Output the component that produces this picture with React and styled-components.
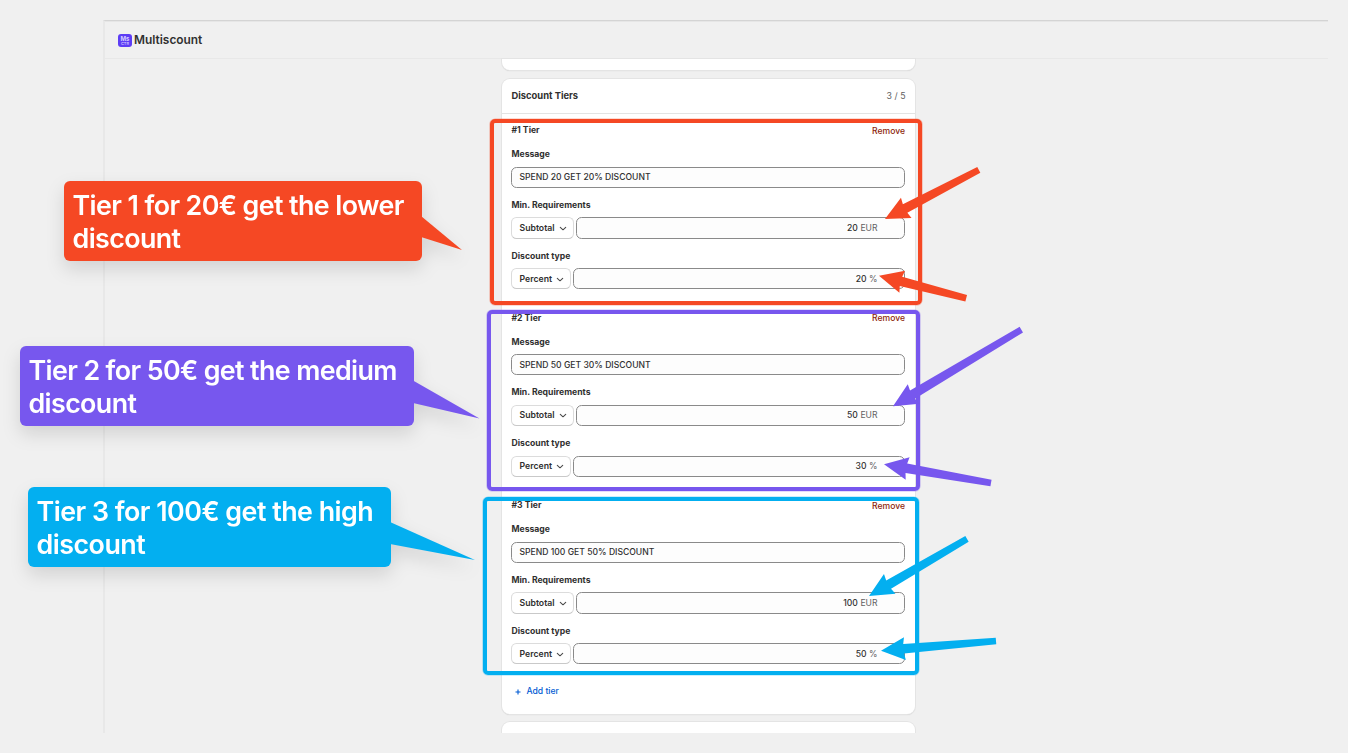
import styled, { createGlobalStyle } from "styled-components";

const GlobalStyle = createGlobalStyle`
  * {
    box-sizing: border-box;
  }
  body {
    margin: 0;
    background: #f0f0f0;
    font-family: Inter, "Liberation Sans", sans-serif;
    color: #303030;
  }
`;

const Page = styled.main`
  position: relative;
  width: 1348px;
  height: 753px;
  padding: 20px 20px 20px 103px;
  overflow: hidden;
  background: #f0f0f0;
`;

const Frame = styled.section`
  height: 713px;
  display: flex;
  flex-direction: column;
  overflow: hidden;
  border-top: 1px solid #d4d4d4;
  border-left: 2px solid #e8e8e8;
  box-shadow: inset 0 1px 0 #e6e6e6;
`;

const TopBar = styled.header`
  height: 38px;
  flex: none;
  display: flex;
  align-items: center;
  gap: 2px;
  padding: 0 13px;
  border-bottom: 1px solid #e8e8e8;
`;

const AppIcon = styled.span`
  width: 14px;
  height: 13px;
  margin-top: 2px;
  display: flex;
  flex-direction: column;
  align-items: center;
  border-radius: 3px;
  background: #5d3df5;
  color: #d6cdff;
  font-size: 6px;
  font-weight: 700;
  line-height: 7px;
  padding-top: 1px;
`;

const AppIconSub = styled.span`
  font-size: 4px;
  font-weight: 500;
  line-height: 4px;
`;

const AppName = styled.h1`
  margin: 0;
  font-size: 11.9px;
  font-weight: 600;
  line-height: 16px;
`;

const Content = styled.div`
  width: 413px;
  margin-left: 397px;
  display: flex;
  flex-direction: column;
  gap: 8.2px;
`;

const Card = styled.div`
  flex: none;
  height: ${p => p.$height}px;
  border-radius: ${p => p.$radius || "8px"};
  background: #fff;
  box-shadow: 0 0 0 1px #e4e4e4, 0 1px 1px #c8c8c8;
`;

const CardHeader = styled.div`
  height: 35.5px;
  display: flex;
  align-items: center;
  justify-content: space-between;
  padding: 0 9.5px;
  border-bottom: 1px solid #e3e3e3;
`;

const CardTitle = styled.h2`
  margin: 0;
  font-size: 9.4px;
  font-weight: 650;
  line-height: 12px;
`;

const Count = styled.span`
  font-size: 8.8px;
  line-height: 12px;
  color: #616161;
`;

const TierBlock = styled.div`
  height: 187.5px;
  display: flex;
  flex-direction: column;
  gap: 11px;
  padding: 10px 10px 0 9px;
  border-bottom: 1px solid #ebebeb;

  &:nth-of-type(4) {
    border-bottom-color: transparent;
  }
`;

const TierHead = styled.div`
  height: 13px;
  display: flex;
  justify-content: space-between;
`;

const Label = styled.span`
  padding-left: 0.5px;
  font-size: 8.65px;
  font-weight: 650;
  line-height: 12px;
`;

const Remove = styled.span`
  padding-top: 0.6px;
  font-size: 8.6px;
  font-weight: 450;
  line-height: 12px;
  color: #8e1f0b;
`;

const Field = styled.div`
  height: 39.75px;
  display: flex;
  flex-direction: column;
  justify-content: space-between;
`;

const Controls = styled.div`
  display: flex;
  gap: 2px;
`;

const Input = styled.div`
  flex: 1;
  height: 21.25px;
  display: flex;
  align-items: center;
  justify-content: ${p => (p.$end ? "flex-end" : "flex-start")};
  gap: 2.5px;
  padding: 0 ${p => (p.$end ? "26.5px" : "8px")} 0.4px 7.5px;
  border: 1px solid #8a8a8a;
  border-radius: 5.5px;
  background: #fdfdfd;
  font-size: 8.6px;
  font-weight: 450;
`;

const Unit = styled.span`
  color: #616161;
  font-weight: 400;
`;

const Picker = styled.div`
  width: ${p => p.$width}px;
  height: 21.25px;
  display: flex;
  align-items: center;
  justify-content: space-between;
  padding: 0 6.5px 0 7.5px;
  border: 1px solid #dcdcdc;
  border-bottom-color: #c9c9c9;
  border-radius: 5.5px;
  background: #fff;
  font-size: 8.7px;
  font-weight: 600;
`;

const AddTier = styled.div`
  display: flex;
  align-items: center;
  gap: 6px;
  padding: 8.2px 12.5px;
  color: #005bd3;
  font-size: 8.6px;
  font-weight: 450;
  line-height: 12px;

  svg {
    margin-top: 2px;
  }
`;

const Highlight = styled.div`
  position: absolute;
  left: ${p => p.$box[0]}px;
  top: ${p => p.$box[1]}px;
  width: ${p => p.$box[2]}px;
  height: ${p => p.$box[3]}px;
  border: 4px solid ${p => p.$color};
  border-radius: 5px;
  box-shadow: 0 0 0 0.6px ${p => p.$color}66;
`;

const Callout = styled.div`
  position: absolute;
  left: ${p => p.$box[0]}px;
  top: ${p => p.$box[1]}px;
  width: ${p => p.$box[2]}px;
  height: 80px;
  padding: 8px 8.5px;
  border-radius: 6px;
  background: ${p => p.$color};
  color: #fff;
  font-size: 26.8px;
  font-weight: 600;
  line-height: 33px;
  letter-spacing: ${p => p.$spacing}px;
  white-space: pre;
  filter: drop-shadow(0 8px 9px rgba(0, 0, 0, 0.12));
`;

const Tail = styled.svg`
  position: absolute;
  left: 100%;
  top: 0;
  overflow: visible;
`;

const ArrowLayer = styled.svg`
  position: absolute;
  inset: 0;
  pointer-events: none;
`;

const RED = "#f54824";
const PURPLE = "#7757ee";
const BLUE = "#03aff0";

const tiers = [
  { message: "SPEND 20 GET 20% DISCOUNT", min: 20, percent: 20 },
  { message: "SPEND 50 GET 30% DISCOUNT", min: 50, percent: 30 },
  { message: "SPEND 100 GET 50% DISCOUNT", min: 100, percent: 50 },
];

const highlights = [
  { color: RED, box: [489.5, 118.5, 432.5, 186.5] },
  { color: PURPLE, box: [487, 309.5, 433, 181.5] },
  { color: BLUE, box: [483, 496.5, 436, 178.5] },
];

const callouts = [
  { color: RED, box: [64, 181, 358], spacing: -0.58, tail: "-1,35 40,69 -1,56", text: "Tier 1 for 20€ get the lower\ndiscount" },
  { color: PURPLE, box: [20, 346, 394], spacing: -0.61, tail: "-1,34.5 65.5,72.5 -1,57", text: "Tier 2 for 50€ get the medium\ndiscount" },
  { color: BLUE, box: [28, 487, 363], spacing: -0.5, tail: "-1,35 84,73 -1,57", text: "Tier 3 for 100€ get the high\ndiscount" },
];

const arrows = [
  { color: RED, tip: [885, 219], end: [978.8, 169.8] },
  { color: RED, tip: [879, 275.7], end: [966.2, 298.2] },
  { color: PURPLE, tip: [893, 406.3], end: [1021.3, 329.7] },
  { color: PURPLE, tip: [884, 464.3], end: [991, 483] },
  { color: BLUE, tip: [869, 596], end: [967, 538.8] },
  { color: BLUE, tip: [881, 650.7], end: [996, 641] },
];

// the shaft gets thicker towards the head
const Arrow = ({ color, tip, end }) => {
  const length = Math.hypot(end[0] - tip[0], end[1] - tip[1]);
  const ux = (end[0] - tip[0]) / length;
  const uy = (end[1] - tip[1]) / length;
  const at = (along, side) =>
    `${tip[0] + ux * along - uy * side},${tip[1] + uy * along + ux * side}`;
  const points = [
    at(0, 0),
    at(24, 11.4),
    at(22.7, 4.8),
    at(length, 3.3),
    at(length, -3.3),
    at(22.7, -4.8),
    at(24, -11.4),
  ];
  return <polygon points={points.join(" ")} fill={color} />;
};

const Chevron = () => (
  <svg width="8" height="8" viewBox="0 0 8 8" fill="none" stroke="#4a4a4a" strokeWidth="1.1" strokeLinecap="round" strokeLinejoin="round">
    <path d="M1.3 3.4 4 5.8l2.7-2.4" />
  </svg>
);

const Tier = ({ index, tier }) => {
  return <TierBlock>
    <TierHead>
      <Label>#{index} Tier</Label>
      <Remove>Remove</Remove>
    </TierHead>
    <Field>
      <Label>Message</Label>
      <Controls>
        <Input>{tier.message}</Input>
      </Controls>
    </Field>
    <Field>
      <Label>Min. Requirements</Label>
      <Controls>
        <Picker $width={63}>Subtotal <Chevron /></Picker>
        <Input $end>{tier.min} <Unit>EUR</Unit></Input>
      </Controls>
    </Field>
    <Field>
      <Label>Discount type</Label>
      <Controls>
        <Picker $width={60}>Percent <Chevron /></Picker>
        <Input $end>{tier.percent} <Unit>%</Unit></Input>
      </Controls>
    </Field>
  </TierBlock>
}

export default function App() {
  return (
    <Page>
      <GlobalStyle />
      <Frame>
        <TopBar>
          <AppIcon>Ms<AppIconSub>CTR</AppIconSub></AppIcon>
          <AppName>Multiscount</AppName>
        </TopBar>
        <Content>
          <Card $height={11.4} $radius="0 0 8px 8px" />
          <Card $height={635.1}>
            <CardHeader>
              <CardTitle>Discount Tiers</CardTitle>
              <Count>3 / 5</Count>
            </CardHeader>
            {tiers.map((tier, i) => (
              <Tier key={tier.message} index={i + 1} tier={tier} />
            ))}
            <AddTier>
              <svg width="6" height="6" viewBox="0 0 6 6" stroke="#005bd3" strokeWidth="1.1">
                <path d="M3 .5v5M.5 3h5" />
              </svg>
              Add tier
            </AddTier>
          </Card>
          <Card $height={40} />
        </Content>
      </Frame>
      {highlights.map(h => (
        <Highlight key={h.color} $box={h.box} $color={h.color} />
      ))}
      {callouts.map(c => (
        <Callout key={c.color} $box={c.box} $color={c.color} $spacing={c.spacing}>
          {c.text}
          <Tail width="90" height="80">
            <polygon points={c.tail} fill={c.color} />
          </Tail>
        </Callout>
      ))}
      <ArrowLayer width="1348" height="753">
        {arrows.map(a => (
          <Arrow key={a.tip.join()} {...a} />
        ))}
      </ArrowLayer>
    </Page>
  );
}
